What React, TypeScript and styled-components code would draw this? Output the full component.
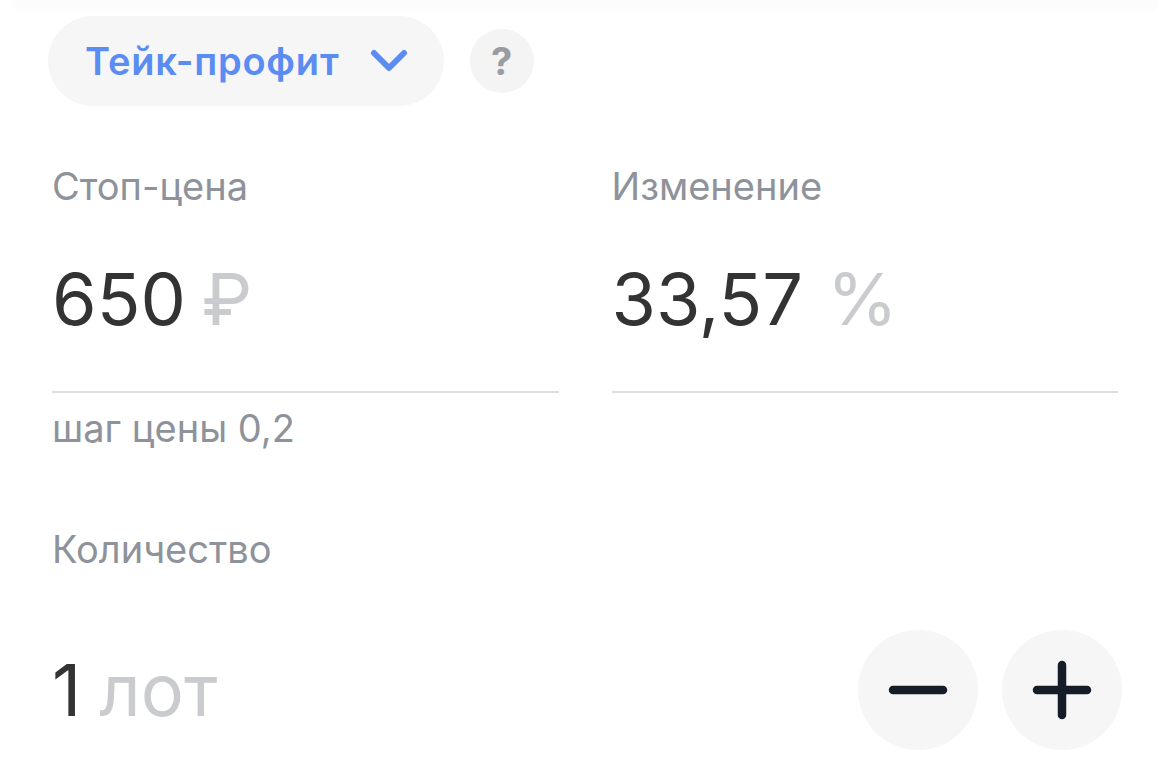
import React from 'react';
import styled, { createGlobalStyle } from 'styled-components';

const GlobalStyle = createGlobalStyle`
  html, body {
    margin: 0;
    padding: 0;
    background: #ffffff;
  }
  body {
    font-family: Inter, Roboto, "Noto Sans", "Liberation Sans", sans-serif;
    -webkit-font-smoothing: antialiased;
  }
`;

type Field = {
  label: string;
  value: string;
  unit: string;
  hint?: string;
  unitGap: number;
};

const fields: Field[] = [
  { label: 'Стоп-цена', value: '650', unit: '₽', hint: 'шаг цены 0,2', unitGap: 16 },
  { label: 'Изменение', value: '33,57', unit: '%', unitGap: 24 },
];

const ChevronDown = () => (
  <svg width="38" height="24" viewBox="0 0 38 24" fill="none">
    <path d="M4 4 L19 19 L34 4" stroke="currentColor" strokeWidth="6" strokeLinecap="round" strokeLinejoin="round" />
  </svg>
);

const MinusIcon = () => (
  <svg width="60" height="12" viewBox="0 0 60 12" fill="none">
    <path d="M5 6 H55" stroke="currentColor" strokeWidth="8.5" strokeLinecap="round" />
  </svg>
);

const PlusIcon = () => (
  <svg width="60" height="60" viewBox="0 0 60 60" fill="none">
    <path d="M5 30 H55 M30 5 V55" stroke="currentColor" strokeWidth="8.5" strokeLinecap="round" />
  </svg>
);

export default function App() {
  return (
    <>
      <GlobalStyle />
      <Page>
        <TopEdge />
        <Header>
          <TypeSelect type="button">
            Тейк-профит
            <ChevronDown />
          </TypeSelect>
          <HelpButton type="button">?</HelpButton>
        </Header>

        <FieldsGrid>
          {fields.map((f) => (
            <FieldBox key={f.label}>
              <Label>{f.label}</Label>
              <ValueLine>
                <Value>{f.value}</Value>
                <Unit $gap={f.unitGap}>{f.unit}</Unit>
              </ValueLine>
              <Divider />
              {f.hint && <Hint>{f.hint}</Hint>}
            </FieldBox>
          ))}
        </FieldsGrid>

        <QuantityBlock>
          <Label>Количество</Label>
          <QuantityRow>
            <ValueLine>
              <Value>1</Value>
              <Unit $gap={18}>лот</Unit>
            </ValueLine>
            <Steppers>
              <RoundButton type="button" aria-label="Уменьшить">
                <MinusIcon />
              </RoundButton>
              <RoundButton type="button" aria-label="Увеличить">
                <PlusIcon />
              </RoundButton>
            </Steppers>
          </QuantityRow>
        </QuantityBlock>
      </Page>
    </>
  );
}

const Page = styled.div`
  width: 1170px;
  height: 772px;
  overflow: hidden;
  box-sizing: border-box;
  padding: 0 52px;
  color: #333333;
`;

const TopEdge = styled.div`
  height: 8px;
  margin: 0 -40px;
  border-radius: 0 0 60px 60px;
  background: #fcfcfc;
  box-shadow: 0 2px 6px rgba(0, 0, 0, 0.025);
`;

const Header = styled.div`
  display: flex;
  align-items: center;
  gap: 26px;
  margin: 8px 0 0 -4px;
`;

const TypeSelect = styled.button`
  display: flex;
  align-items: center;
  gap: 30px;
  height: 90px;
  padding: 0 36px 0 37px;
  border: none;
  border-radius: 45px;
  background: #f6f6f7;
  color: #5a8cf2;
  font-family: inherit;
  font-size: 38px;
  font-weight: 600;
  letter-spacing: 0.8px;
  cursor: pointer;
`;

const HelpButton = styled.button`
  width: 64px;
  height: 64px;
  border: none;
  border-radius: 50%;
  background: #f4f4f5;
  color: #9a9ca2;
  font-family: inherit;
  font-size: 38px;
  font-weight: 700;
  padding: 0;
  cursor: pointer;
`;

const FieldsGrid = styled.div`
  display: grid;
  grid-template-columns: 1fr 1fr;
  column-gap: 53px;
  margin-top: 58px;
`;

const FieldBox = styled.div`
  display: flex;
  flex-direction: column;
`;

const Label = styled.div`
  font-size: 38px;
  line-height: 44px;
  color: #8e929a;
`;

const ValueLine = styled.div`
  display: flex;
  align-items: baseline;
  margin-top: 46px;
  font-size: 72px;
  line-height: 90px;
`;

const Value = styled.span`
  color: #333333;
`;

const Unit = styled.span<{ $gap: number }>`
  margin-left: ${({ $gap }) => $gap}px;
  color: #c9cbcf;
`;

const Divider = styled.div`
  height: 2px;
  margin-top: 47px;
  background: #dcdde0;
`;

const Hint = styled.div`
  margin-top: 13px;
  font-size: 38px;
  line-height: 44px;
  color: #8e929a;
`;

const QuantityBlock = styled.div`
  margin-top: 77px;
`;

const QuantityRow = styled.div`
  display: flex;
  align-items: center;
  justify-content: space-between;
  margin-right: -4px;
  margin-top: 59px;

  ${ValueLine} {
    margin-top: 0;
  }
`;

const Steppers = styled.div`
  display: flex;
  gap: 24px;
`;

const RoundButton = styled.button`
  display: flex;
  align-items: center;
  justify-content: center;
  width: 120px;
  height: 120px;
  padding: 0;
  border: none;
  border-radius: 50%;
  background: #f6f6f7;
  color: #161d29;
  cursor: pointer;
`;
